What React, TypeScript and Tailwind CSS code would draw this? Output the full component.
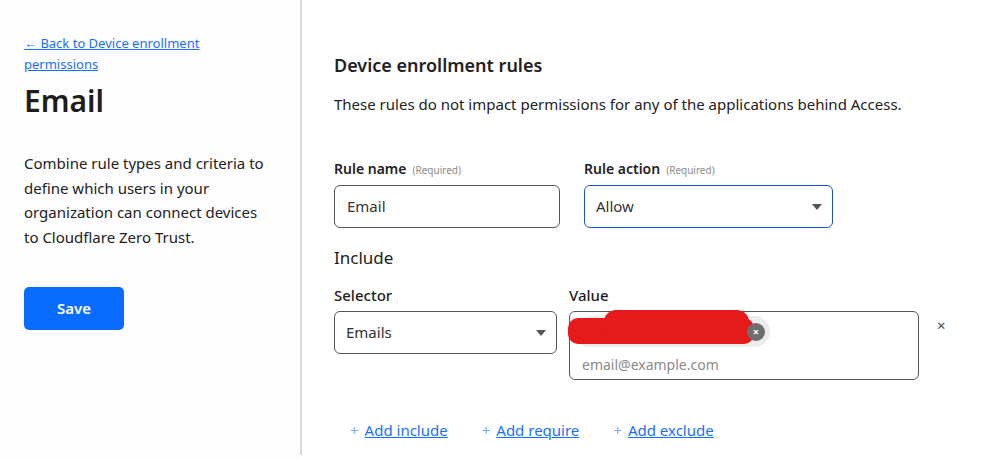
import React from "react";

const font = { fontFamily: '"Noto Sans", "Segoe UI", sans-serif' };

function Caret() {
  return (
    <svg width="10" height="6" viewBox="0 0 10 6" className="shrink-0">
      <path d="M0 0 L10 0 L5 6 Z" fill="#555" />
    </svg>
  );
}

function AddLink({ label }: { label: string }) {
  return (
    <span className="flex items-center gap-[6px] text-[#1a6ffb]">
      <span className="text-[#7aa7ff]">+</span>
      <span className="underline">{label}</span>
    </span>
  );
}

export default function App() {
  return (
    <div className="flex h-[459px] w-[996px] bg-white text-[#222]" style={font}>
      <aside className="w-[300px] shrink-0 bg-[#fdfdfd] pl-6 pr-8 pt-[33px]">
        <a className="block text-[13px] leading-[21px] text-[#1a6ffb] underline">
          ← Back to Device enrollment permissions
        </a>
        <h1 className="mt-[6px] text-[30px] font-semibold leading-[40px] text-[#1d1d1d]">Email</h1>
        <p className="mt-[30px] w-[250px] text-[15px] leading-[24.5px] text-[#222]">
          Combine rule types and criteria to define which users in your organization can connect devices to
          Cloudflare Zero Trust.
        </p>
        <button className="mt-[38px] flex h-[43px] w-[100px] items-center justify-center rounded-[5px] bg-[#0a6cff] text-[15px] font-semibold text-white">
          Save
        </button>
      </aside>
      <div className="my-0 h-[455px] w-[2px] bg-[#d9d9d9]" />
      <main className="flex-1 pl-[32px] pt-[52px]">
        <h2 className="text-[18px] font-semibold leading-[26px] text-[#222]">Device enrollment rules</h2>
        <p className="mt-[15px] text-[15px] leading-[22px] text-[#222]">
          These rules do not impact permissions for any of the applications behind Access.
        </p>

        <div className="mt-[44px] flex gap-[24px]">
          <div className="w-[226px]">
            <div className="flex items-baseline gap-[6px] text-[14px] font-semibold leading-[20px]">
              Rule name <span className="text-[10px] font-normal text-[#8a8a8a]">(Required)</span>
            </div>
            <div className="mt-[5px] flex h-[43px] items-center rounded-[6px] border border-[#555] px-[12px] text-[15px] text-[#333]">
              Email
            </div>
          </div>
          <div className="w-[249px]">
            <div className="flex items-baseline gap-[6px] text-[14px] font-semibold leading-[20px]">
              Rule action <span className="text-[10px] font-normal text-[#8a8a8a]">(Required)</span>
            </div>
            <div className="mt-[5px] flex h-[43px] items-center justify-between rounded-[6px] border border-[#1a55c9] pl-[11px] pr-[10px] text-[15px] text-[#333]">
              Allow
              <Caret />
            </div>
          </div>
        </div>

        <h3 className="mt-[18px] text-[17px] leading-[24px] text-[#222]">Include</h3>

        <div className="mt-[15px] flex items-start">
          <div className="w-[223px]">
            <div className="text-[15px] font-medium leading-[20px]">Selector</div>
            <div className="mt-[6px] flex h-[43px] items-center justify-between rounded-[6px] border border-[#555] pl-[11px] pr-[10px] text-[15px] text-[#333]">
              Emails
              <Caret />
            </div>
          </div>
          <div className="ml-[12px] w-[350px]">
            <div className="text-[15px] font-medium leading-[20px]">Value</div>
            <div className="mt-[6px] h-[69px] rounded-[6px] border border-[#555] px-[4px] pt-[4px]">
              <div className="relative flex h-[31px] w-[196px] items-center justify-end rounded-full bg-[#ececec] pr-[5px]">
                <div className="absolute left-[-6px] top-[2px] h-[26px] w-[186px] rounded-[10px] bg-[#e61a1a]" />
                <div className="absolute left-[30px] top-[-6px] h-[30px] w-[145px] rounded-[12px] bg-[#e61a1a]" />
                <span className="relative flex h-[18px] w-[18px] items-center justify-center rounded-full bg-[#6e6e6e] text-[11px] font-bold leading-none text-white">
                  ×
                </span>
              </div>
              <div className="mt-[8px] pl-[8px] text-[14px] leading-[20px] text-[#8a8a8a]">email@example.com</div>
            </div>
          </div>
          <div className="ml-[18px] mt-[29px] text-[15px] text-[#444]">×</div>
        </div>

        <div className="mt-[40px] flex gap-[34px] pl-[16px] text-[15px] leading-[20px]">
          <AddLink label="Add include" />
          <AddLink label="Add require" />
          <AddLink label="Add exclude" />
        </div>
      </main>
    </div>
  );
}
